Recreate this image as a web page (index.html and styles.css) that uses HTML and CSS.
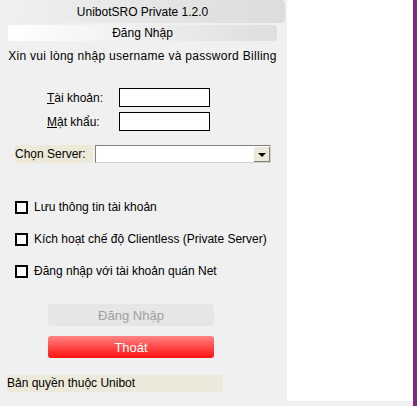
FILE: index.html
```html
<!DOCTYPE html>
<html lang="vi">
<head>
    <meta charset="UTF-8">
    <title>UnibotSRO Private 1.2.0</title>
    <link rel="stylesheet" href="styles.css">
</head>
<body>
    <div class="window">
        <div class="panel">
            <div class="title">UnibotSRO Private 1.2.0</div>
            <div class="subtitle">Đăng Nhập</div>
            <p class="intro">Xin vui lòng nhập username và password Billing</p>

            <div class="field field-first">
                <label for="user"><u>T</u>ài khoản:</label>
                <input id="user" type="text">
            </div>
            <div class="field">
                <label for="pass"><u>M</u>ật khẩu:</label>
                <input id="pass" type="password">
            </div>

            <div class="server">
                <span class="server-label">Chọn Server:</span>
                <div class="select">
                    <span class="select-text"></span>
                    <span class="select-btn"><span class="arrow"></span></span>
                </div>
            </div>

            <div class="options">
                <label class="check"><span class="box"></span>Lưu thông tin tài khoản</label>
                <label class="check"><span class="box"></span>Kích hoạt chế độ Clientless (Private Server)</label>
                <label class="check"><span class="box"></span>Đăng nhập với tài khoản quán Net</label>
            </div>

            <div class="buttons">
                <button class="btn btn-login" disabled>Đăng Nhập</button>
                <button class="btn btn-exit">Thoát</button>
            </div>

            <div class="copyright">Bản quyền thuộc Unibot</div>
        </div>
        <div class="viewer">
            <div class="viewer-area"></div>
        </div>
        <div class="edge"></div>
    </div>
</body>
</html>
```

FILE: styles.css
```css
body {
    margin: 0;
    background-color: #f0f0f0;
    font-family: "Liberation Sans", Arial, sans-serif;
    font-size: 12px;
    color: #000000;
}

.window {
    display: flex;
    width: 417px;
    height: 406px;
}

.panel {
    width: 287px;
    flex-shrink: 0;
}

.title {
    width: 285px;
    height: 23px;
    line-height: 24px;
    text-align: center;
    background: linear-gradient(to right, #f0f0f0, #dcdcdc);
    border-radius: 0 4px 4px 0;
}

.subtitle {
    width: 269px;
    height: 16px;
    line-height: 16px;
    margin: 2px 0 0 8px;
    text-align: center;
    background: linear-gradient(to right, #ffffff, #dedede);
    border-radius: 3px;
}

.intro {
    margin: 8px 0 0 0;
    width: 285px;
    text-align: center;
    line-height: 14px;
    letter-spacing: 0.3px;
}

.field {
    display: flex;
    align-items: center;
    margin-left: 47px;
    height: 19px;
    margin-top: 5px;
}

.field-first {
    margin-top: 25px;
}

.field label {
    width: 72px;
}

.field input {
    width: 91px;
    height: 19px;
    box-sizing: border-box;
    border: 1px solid #000000;
    background-color: #ffffff;
    padding: 0;
    margin: 0;
}

.server {
    display: flex;
    align-items: center;
    margin: 14px 0 0 15px;
    height: 18px;
}

.server-label {
    width: 78px;
    height: 18px;
    line-height: 18px;
    background-color: #ece9d8;
}

.select {
    display: flex;
    width: 176px;
    height: 18px;
    margin-left: 2px;
    box-sizing: border-box;
    border: 1px solid #808080;
    border-right-color: #d4d0c8;
    border-bottom-color: #d4d0c8;
    background-color: #ffffff;
}

.select-text {
    flex: 1;
}

.select-btn {
    display: flex;
    align-items: center;
    justify-content: center;
    width: 16px;
    background-color: #ece9d8;
    border-left: 1px solid #ffffff;
    border-top: 1px solid #ffffff;
    box-shadow: inset -1px -1px 0 #808080;
}

.arrow {
    width: 0;
    height: 0;
    border-left: 4px solid transparent;
    border-right: 4px solid transparent;
    border-top: 4px solid #000000;
}

.options {
    display: flex;
    flex-direction: column;
    gap: 18px;
    margin: 37px 0 0 15px;
}

.check {
    display: flex;
    align-items: center;
    height: 14px;
}

.box {
    width: 9px;
    height: 9px;
    border: 2px solid #000000;
    background-color: #ffffff;
    margin-right: 6px;
}

.buttons {
    display: flex;
    flex-direction: column;
    gap: 10px;
    margin: 26px 0 0 48px;
}

.btn {
    width: 166px;
    height: 22px;
    border: none;
    border-radius: 3px;
    font-family: "Liberation Sans", Arial, sans-serif;
    font-size: 13px;
    padding: 0;
}

.btn-login {
    background-color: #e6e6e6;
    color: #a0a0a0;
}

.btn-exit {
    background: linear-gradient(to bottom, #ff8484, #ff1010);
    color: #ffffff;
}

.copyright {
    width: 216px;
    height: 17px;
    line-height: 17px;
    margin: 17px 0 0 7px;
    background-color: #ede9da;
}

.viewer {
    width: 126px;
    padding-bottom: 5px;
}

.viewer-area {
    height: 401px;
    background-color: #ffffff;
}

.edge {
    width: 4px;
    background-color: #7b2d7b;
}
```
